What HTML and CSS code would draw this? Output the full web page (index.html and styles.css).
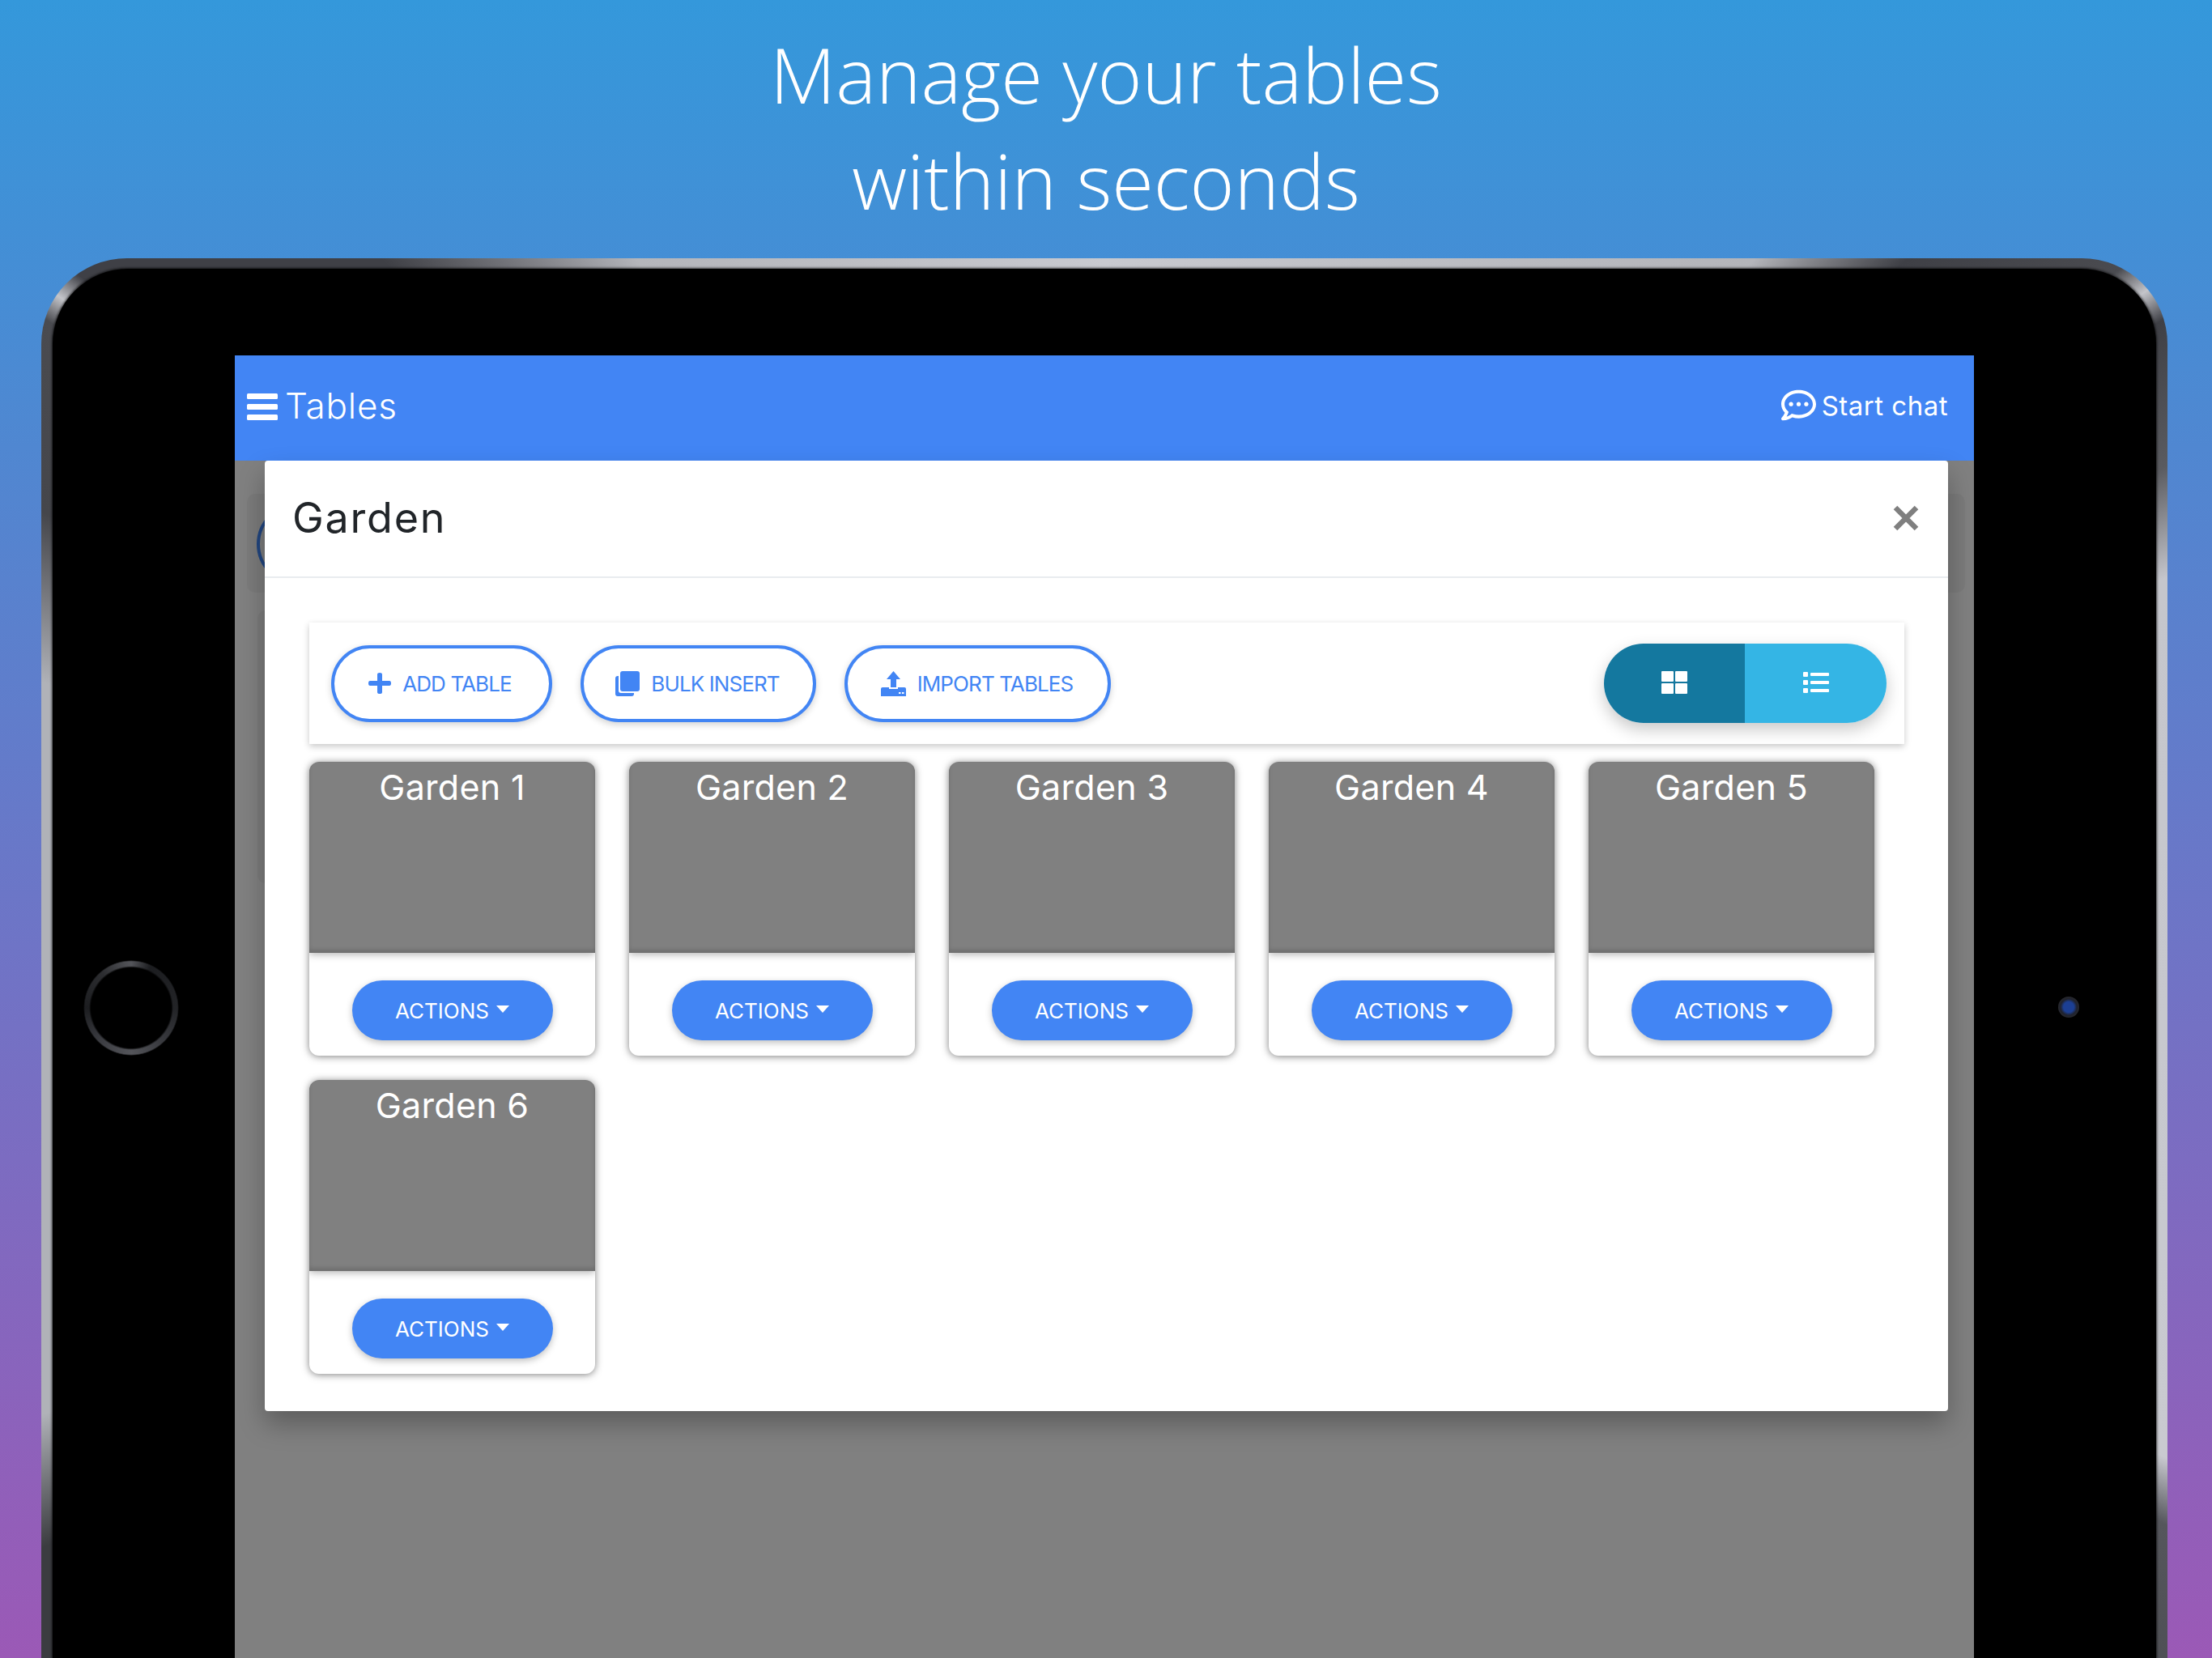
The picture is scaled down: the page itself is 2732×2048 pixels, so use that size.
FILE: index.html
```html
<!DOCTYPE html>
<html lang="en">
<head>
<meta charset="utf-8">
<title>Manage your tables</title>
<link rel="stylesheet" href="styles.css">
</head>
<body>
<header class="headline">
  <div>Manage your tables</div>
  <div>within seconds</div>
</header>
<div class="device">
  <div class="bezel">
    <div class="home"></div>
    <div class="camera"></div>
    <main class="screen">
      <div class="appbar">
        <div class="appbar-left">
          <svg class="hamburger" viewBox="0 0 38 33"><rect y="0" width="38" height="7" rx="1.5"/><rect y="13" width="38" height="7" rx="1.5"/><rect y="26" width="38" height="7" rx="1.5"/></svg>
          <span class="appbar-title">Tables</span>
        </div>
        <div class="appbar-right">
          <svg class="chat-icon" viewBox="0 0 512 512"><path d="M144 208c-17.700 0-32 14.300-32 32s14.300 32 32 32 32-14.300 32-32-14.300-32-32-32zm112 0c-17.700 0-32 14.300-32 32s14.300 32 32 32 32-14.300 32-32-14.300-32-32-32zm112 0c-17.700 0-32 14.300-32 32s14.300 32 32 32 32-14.300 32-32-14.300-32-32-32zM256 32C114.600 32 0 125.100 0 240c0 47.600 19.900 91.200 52.900 126.300C38 405.700 7 439.100 6.500 439.500c-6.600 7-8.400 17.200-4.600 26S14.400 480 24 480c61.500 0 110-25.700 139.100-46.300C192 442.800 223.200 448 256 448c141.400 0 256-93.100 256-208S397.400 32 256 32zm0 368c-26.700 0-53.100-4.100-78.400-12.100l-22.700-7.200-19.500 13.800c-14.300 10.100-33.900 21.400-57.500 29 7.300-12.100 14.400-25.700 19.900-40.200l10.600-28.100-20.600-21.800C69.700 314.100 48 282.200 48 240c0-88.200 93.300-160 208-160s208 71.800 208 160-93.300 160-208 160z"/></svg>
          <span class="chat-label">Start chat</span>
        </div>
      </div>
      <div class="behind">
        <div class="behind-top"><span class="behind-circle"></span></div>
        <div class="behind-main"></div>
      </div>
      <section class="modal">
        <div class="modal-head">
          <h1 class="modal-title">Garden</h1>
          <svg class="close" viewBox="0 0 32 32"><path d="M3 3 29 29M29 3 3 29"/></svg>
        </div>
        <div class="modal-body">
          <div class="toolbar">
            <div class="actions">
              <button class="outline btn-add"><svg class="ico ico-plus" viewBox="0 0 28 26"><path d="M11 2a3 2 0 0 1 6 0v8h9a2 3 0 0 1 0 6h-9v8a3 2 0 0 1-6 0v-8H2a2 3 0 0 1 0-6h9z"/></svg><span>ADD TABLE</span></button>
              <button class="outline btn-bulk"><svg class="ico ico-copy" viewBox="0 0 30 31"><path d="M3 6h1v18a3 3 0 0 0 3 3h16v1a3 3 0 0 1-3 3H3a3 3 0 0 1-3-3V9a3 3 0 0 1 3-3z"/><rect x="6" y="0" width="24" height="25" rx="3"/></svg><span>BULK INSERT</span></button>
              <button class="outline btn-import"><svg class="ico ico-import" viewBox="0 0 31 31"><path d="M15.500 0 24 10h-5v10h-7V10H7z"/><path fill-rule="evenodd" d="M0 22a2 2 0 0 1 2-2h8v2h11v-2h8a2 2 0 0 1 2 2v9H0zM22 26v2h2.500v-2zM26 26v2h2.500v-2z"/></svg><span>IMPORT TABLES</span></button>
            </div>
            <div class="toggle">
              <div class="toggle-side toggle-on"><svg class="ico-grid" viewBox="0 0 32 28"><rect width="15" height="13" rx="1"/><rect x="17" width="15" height="13" rx="1"/><rect y="15" width="15" height="13" rx="1"/><rect x="17" y="15" width="15" height="13" rx="1"/></svg></div>
              <div class="toggle-side toggle-off"><svg class="ico-list" viewBox="0 0 32 26"><rect width="6" height="6" rx="1"/><rect y="10" width="6" height="6" rx="1"/><rect y="20" width="6" height="6" rx="1"/><rect x="9" y="1" width="23" height="4" rx="1"/><rect x="9" y="11" width="23" height="4" rx="1"/><rect x="9" y="21" width="23" height="4" rx="1"/></svg></div>
            </div>
          </div>
          <div class="tables">
            <article class="table-card"><div class="table-top">Garden 1</div><div class="table-foot"><button class="act">ACTIONS<span class="caret"></span></button></div></article>
            <article class="table-card"><div class="table-top">Garden 2</div><div class="table-foot"><button class="act">ACTIONS<span class="caret"></span></button></div></article>
            <article class="table-card"><div class="table-top">Garden 3</div><div class="table-foot"><button class="act">ACTIONS<span class="caret"></span></button></div></article>
            <article class="table-card"><div class="table-top">Garden 4</div><div class="table-foot"><button class="act">ACTIONS<span class="caret"></span></button></div></article>
            <article class="table-card"><div class="table-top">Garden 5</div><div class="table-foot"><button class="act">ACTIONS<span class="caret"></span></button></div></article>
            <article class="table-card"><div class="table-top">Garden 6</div><div class="table-foot"><button class="act">ACTIONS<span class="caret"></span></button></div></article>
          </div>
        </div>
      </section>
    </main>
  </div>
</div>
</body>
</html>
```

FILE: styles.css
```css
* { box-sizing: border-box; }
html, body { margin: 0; padding: 0; }
body {
  width: 2732px;
  height: 2048px;
  overflow: hidden;
  background: linear-gradient(180deg, #3498db 0%, #9b59b6 100%);
  font-family: Inter, "Liberation Sans", sans-serif;
}
.headline {
  height: 319px;
  padding-top: 27px;
  text-align: center;
  color: #fff;
  font-family: "Open Sans", sans-serif;
  font-weight: 300;
  font-size: 94px;
  line-height: 131px;
}
.device {
  margin-left: 51px;
  width: 2626px;
  height: 1729px;
  padding: 13px 14px 0;
  border-radius: 106px 106px 0 0;
  background: conic-gradient(from 0deg at 1313px 925px,
    #c9cad0 0deg, #b4b5ba 41deg, #3f4046 47deg, #4a4b50 54deg, #c4c5ca 55.500deg, #3f4046 57deg,
    #5a5b60 63deg, #c5c6cc 68deg, #c9cad0 113deg, #55565c 116deg, #3b3c40 140deg,
    #3b3c40 243deg, #b0b2b8 249deg, #b0b2b8 287deg, #45464b 295deg, #4a4b50 303deg,
    #c4c5ca 304.200deg, #3f4046 305.500deg, #3f4046 316deg, #b5b6bb 328deg, #c9cad0 360deg);
}
.bezel {
  position: relative;
  height: 100%;
  padding: 107px 225px 0 225px;
  border-radius: 93px 93px 0 0;
  background: #000;
  box-shadow: 0 0 3px 1px rgba(0, 0, 0, 0.7);
}
.home {
  position: absolute;
  left: 38px;
  top: 854px;
  width: 118px;
  height: 118px;
  border-radius: 50%;
  background: conic-gradient(#54555a 0deg, #1c1d20 25deg, #232427 90deg, #3a3b40 140deg, #54555a 180deg, #3a3b40 225deg, #1c1d20 270deg, #2c2d30 320deg, #54555a 360deg);
  -webkit-mask: radial-gradient(closest-side, transparent 84%, #000 88%, #000 97%, transparent 100%);
  mask: radial-gradient(closest-side, transparent 84%, #000 88%, #000 97%, transparent 100%);
}
.camera {
  position: absolute;
  left: 2477px;
  top: 899px;
  width: 26px;
  height: 26px;
  border-radius: 50%;
  background: radial-gradient(circle, #1c3f94 0 35%, #20222c 55%, #2c2d31 80%, #000 100%);
}
.screen {
  position: relative;
  height: 1609px;
  background: #808080;
}
.appbar {
  display: flex;
  align-items: center;
  justify-content: space-between;
  height: 130px;
  padding: 0 32px 0 15px;
  background: #4285f4;
  color: #fff;
}
.appbar-left, .appbar-right { display: flex; align-items: center; }
.hamburger { width: 38px; height: 33px; fill: #fff; margin: -3px 9px 0 0; }
.appbar-title { font-size: 44px; font-weight: 300; letter-spacing: 0.8px; margin-top: -6px; }
.chat-icon { width: 43px; height: 43px; fill: #fff; margin: -8px 7px 0 0; }
.chat-label { font-size: 33px; font-weight: 400; letter-spacing: 0.5px; margin-top: -6px; }
.behind { padding: 41px 11px 0 15px; }
.behind-top {
  position: relative;
  height: 122px;
  margin-bottom: 22px;
  border-radius: 10px;
  background: #7b7b7b;
  overflow: hidden;
}
.behind-circle {
  position: absolute;
  left: 12px;
  top: 12px;
  width: 100px;
  height: 100px;
  border-radius: 50%;
  border: 4px solid #21457f;
}
.behind-main {
  height: 337px;
  margin: 0 21px 0 13px;
  border-radius: 10px;
  background: #7b7b7b;
}
.modal {
  position: absolute;
  left: 37px;
  top: 130px;
  width: 2079px;
  height: 1174px;
  border-radius: 4px;
  background: #fff;
  box-shadow: 0 16px 32px rgba(0, 0, 0, 0.28);
}
.modal-head {
  display: flex;
  align-items: center;
  justify-content: space-between;
  height: 145px;
  padding: 0 36px 0 34px;
  border-bottom: 2px solid #e9ecef;
}
.modal-title { margin: -2px 0 0; font-size: 52px; font-weight: 400; color: #212529; letter-spacing: 1.8px; }
.close { width: 32px; height: 32px; fill: none; stroke: #7f7f7f; stroke-width: 6.500; margin-top: -2px; }
.modal-body { padding: 55px 55px 0; }
.toolbar {
  display: flex;
  align-items: center;
  justify-content: space-between;
  height: 150px;
  width: 1970px;
  padding: 0 22px 0 27px;
  background: #fff;
  box-shadow: 0 3px 8px rgba(0, 0, 0, 0.22);
}
.actions { display: flex; gap: 35px; }
.outline {
  display: flex;
  align-items: center;
  justify-content: center;
  height: 95px;
  padding: 0;
  border: 4px solid #4285f4;
  border-radius: 48px;
  background: #fff;
  color: #4285f4;
  font-family: inherit;
  font-size: 26px;
  font-weight: 400;
  letter-spacing: -0.9px;
  box-shadow: 0 3px 8px rgba(0, 0, 0, 0.18);
}
.btn-add { width: 273px; }
.btn-bulk { width: 291px; }
.btn-import { width: 329px; }
.ico { fill: #4285f4; margin-right: 14px; }
.ico-plus { width: 28px; height: 26px; margin-left: -4px; }
.ico-copy { width: 30px; height: 31px; margin-left: -2px; }
.ico-import { width: 31px; height: 31px; margin-left: -2px; }
.toggle {
  display: flex;
  width: 349px;
  height: 98px;
  border-radius: 49px;
  overflow: hidden;
  box-shadow: 0 8px 20px rgba(0, 0, 0, 0.22);
}
.toggle-side { display: flex; align-items: center; justify-content: center; }
.toggle-on { width: 174px; background: #14789f; }
.toggle-off { width: 175px; background: #34b5e5; }
.ico-grid { width: 32px; height: 28px; fill: #fff; margin-top: -3px; }
.ico-list { width: 32px; height: 26px; fill: #fff; margin-top: -3px; }
.tables {
  display: grid;
  grid-template-columns: repeat(5, 353px);
  column-gap: 42px;
  row-gap: 30px;
  margin-top: 22px;
}
.table-card {
  height: 363px;
  border-radius: 12px;
  background: #fff;
  box-shadow: 0 1px 10px rgba(0, 0, 0, 0.5);
  overflow: hidden;
}
.table-top {
  height: 236px;
  padding-top: 3px;
  background: #808080;
  color: #fff;
  font-size: 43px;
  font-weight: 400;
  letter-spacing: 0.3px;
  line-height: 56px;
  text-align: center;
  box-shadow: 0 2px 9px rgba(0, 0, 0, 0.3), inset 0 -4px 5px rgba(0, 0, 0, 0.14);
}
.table-foot { display: flex; justify-content: center; padding-top: 34px; }
.act {
  display: flex;
  align-items: center;
  justify-content: center;
  width: 248px;
  height: 74px;
  padding: 0;
  border: 0;
  border-radius: 37px;
  background: #4285f4;
  color: #fff;
  font-family: inherit;
  font-size: 26px;
  box-shadow: 0 3px 8px rgba(0, 0, 0, 0.25);
}
.caret {
  width: 0;
  height: 0;
  margin-left: 9px;
  margin-top: -3px;
  border-style: solid;
  border-width: 9px 8px 0;
  border-color: #fff transparent transparent;
}
```
